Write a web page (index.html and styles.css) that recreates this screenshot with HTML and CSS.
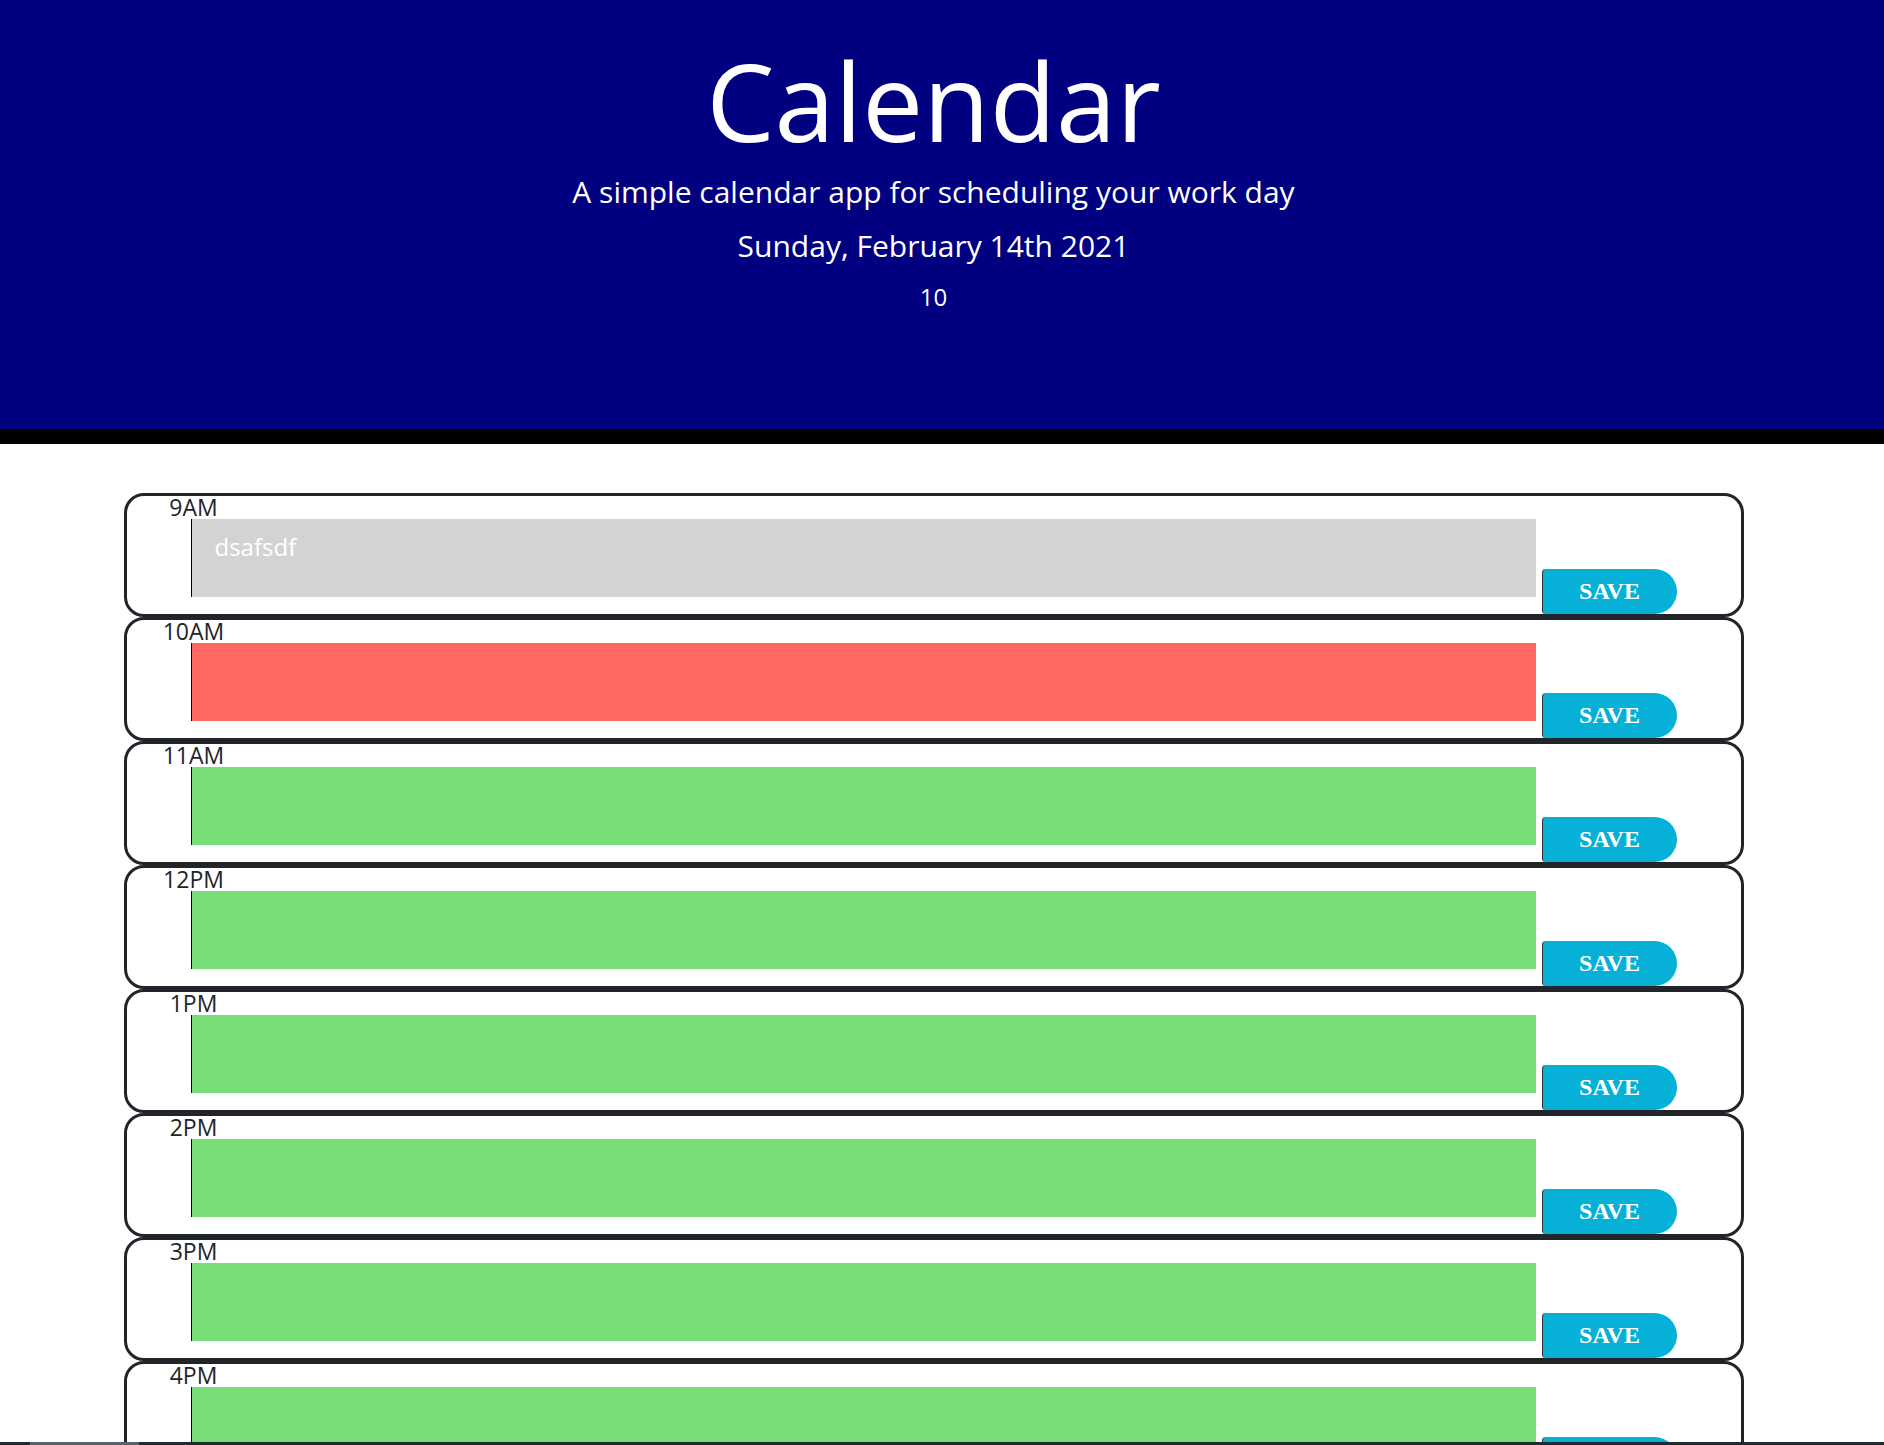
FILE: index.html
```html
<!DOCTYPE html>
<html lang="en">
<head>
<meta charset="utf-8">
<title>Calendar</title>
<link rel="stylesheet" href="styles.css">
</head>
<body>
<header class="jumbotron">
  <div class="jumbo-inner">
    <h1 class="title">Calendar</h1>
    <p class="lead">A simple calendar app for scheduling your work day</p>
    <p class="current-day">Sunday, February 14th 2021</p>
    <p class="current-hour">10</p>
  </div>
</header>
<main class="main">
  <div class="schedule">
    <section class="hour-row">
      <div class="hour-label">9AM</div>
      <div class="hour-body">
        <textarea class="event past">dsafsdf</textarea>
        <button class="save">SAVE</button>
      </div>
    </section>
    <section class="hour-row">
      <div class="hour-label">10AM</div>
      <div class="hour-body">
        <textarea class="event present"></textarea>
        <button class="save">SAVE</button>
      </div>
    </section>
    <section class="hour-row">
      <div class="hour-label">11AM</div>
      <div class="hour-body">
        <textarea class="event future"></textarea>
        <button class="save">SAVE</button>
      </div>
    </section>
    <section class="hour-row">
      <div class="hour-label">12PM</div>
      <div class="hour-body">
        <textarea class="event future"></textarea>
        <button class="save">SAVE</button>
      </div>
    </section>
    <section class="hour-row">
      <div class="hour-label">1PM</div>
      <div class="hour-body">
        <textarea class="event future"></textarea>
        <button class="save">SAVE</button>
      </div>
    </section>
    <section class="hour-row">
      <div class="hour-label">2PM</div>
      <div class="hour-body">
        <textarea class="event future"></textarea>
        <button class="save">SAVE</button>
      </div>
    </section>
    <section class="hour-row">
      <div class="hour-label">3PM</div>
      <div class="hour-body">
        <textarea class="event future"></textarea>
        <button class="save">SAVE</button>
      </div>
    </section>
    <section class="hour-row">
      <div class="hour-label">4PM</div>
      <div class="hour-body">
        <textarea class="event future"></textarea>
        <button class="save">SAVE</button>
      </div>
    </section>
    <section class="hour-row">
      <div class="hour-label">5PM</div>
      <div class="hour-body">
        <textarea class="event future"></textarea>
        <button class="save">SAVE</button>
      </div>
    </section>
  </div>
</main>
<div class="scroll-strip"><div class="scroll-thumb"></div></div>
</body>
</html>
```
FILE: styles.css
```css
html, body {
  margin: 0;
  padding: 0;
}

body {
  font-family: "Open Sans", "Noto Sans", sans-serif;
  color: #212529;
  background: #fff;
}

.jumbotron {
  background: #000080;
  height: 429px;
  border-bottom: 15px solid #000;
  color: #fff;
}

.jumbo-inner {
  padding: 34px 17px 0 0;
  text-align: center;
}

.title {
  margin: 0;
  font-size: 108.5px;
  line-height: 132px;
  font-weight: 400;
}

.lead {
  margin: 4px 0 0;
  font-size: 30px;
  line-height: 43px;
}

.current-day {
  margin: 13px 0 0;
  font-size: 30px;
  line-height: 40px;
}

.current-hour {
  margin: 14px 0 0;
  font-size: 24px;
  line-height: 34px;
}

.main {
  padding-right: 17px;
}

.schedule {
  width: 1620px;
  margin: 49px auto 0;
}

.hour-row {
  box-sizing: border-box;
  height: 124px;
  border: 3px solid #212529;
  border-radius: 20px;
  display: flex;
  flex-direction: column;
}

.hour-label {
  width: 134px;
  text-align: center;
  font-size: 23px;
  line-height: 23px;
  color: #212529;
}

.hour-body {
  flex: 1;
  display: flex;
  align-items: flex-start;
  padding: 0 64px 0 64px;
}

.event {
  flex: 1;
  box-sizing: border-box;
  height: 78px;
  margin: 0;
  padding: 11px 23px;
  border: none;
  border-left: 1px solid #000;
  border-radius: 0;
  font-family: "Open Sans", "Noto Sans", sans-serif;
  font-size: 24px;
  color: #fff;
  resize: none;
  outline: none;
}

.past {
  background: #d3d3d3;
}

.present {
  background: #ff6961;
}

.future {
  background: #77dd77;
}

.save {
  align-self: flex-end;
  box-sizing: border-box;
  width: 135px;
  height: 45px;
  margin: 0 0 0 6px;
  padding: 0;
  border: none;
  border-left: 1px solid #333;
  border-radius: 4px 24px 24px 4px;
  background: #07b0d6;
  color: #fff;
  font-family: "Liberation Serif", "Times New Roman", serif;
  font-weight: 700;
  font-size: 24px;
}

.scroll-strip {
  position: fixed;
  left: 0;
  right: 0;
  bottom: 0;
  height: 3px;
  background: #1f2b33;
}

.scroll-thumb {
  margin-left: 30px;
  width: 109px;
  height: 3px;
  background: #56636b;
}
```
